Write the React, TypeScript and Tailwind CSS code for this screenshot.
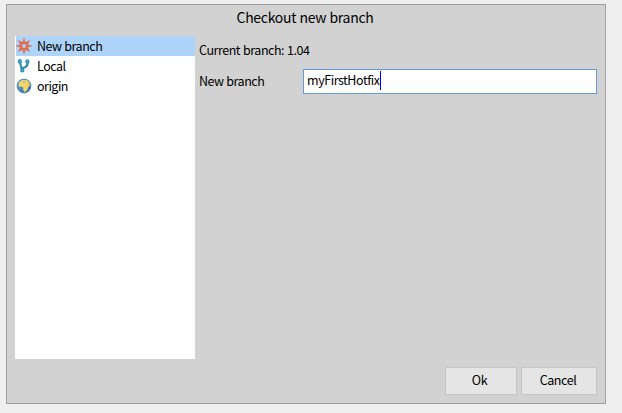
import type { ReactNode } from 'react';

function BurstIcon() {
  return (
    <svg width="16" height="16" viewBox="0 0 16 16" fill="none">
      <path d="M8 .2 9.3 4.6 13.6 2.4 11.4 6.7 15.8 8 11.4 9.3 13.6 13.6 9.3 11.4 8 15.8 6.7 11.4 2.4 13.6 4.6 9.3.2 8 4.6 6.7 2.4 2.4 6.7 4.6Z" fill="#df6b4a" stroke="#df6b4a" strokeWidth=".5" />
      <circle cx="8" cy="8" r="2.1" fill="#b5cbe9" />
    </svg>
  );
}

function BranchIcon() {
  return (
    <svg width="16" height="16" viewBox="0 0 16 16" fill="none">
      <path d="M3.9 4 4.9 8 6.2 12M11.4 4C12 7.6 10.6 9.4 6.4 10.2" stroke="#3389b0" strokeWidth="2.2" />
      <circle cx="3.8" cy="3.3" r="1.5" fill="#5eb6d6" stroke="#3394bb" strokeWidth="1.4" />
      <circle cx="11.4" cy="3.5" r="1.5" fill="#5eb6d6" stroke="#3394bb" strokeWidth="1.4" />
      <circle cx="6.3" cy="12.3" r="1.5" fill="#5eb6d6" stroke="#3394bb" strokeWidth="1.4" />
    </svg>
  );
}

function GlobeIcon() {
  return (
    <svg width="16" height="16" viewBox="0 0 16 16">
      <defs>
        <linearGradient id="sea" x2="1" y2="1">
          <stop stopColor="#79b0df" />
          <stop offset="1" stopColor="#2463a8" />
        </linearGradient>
      </defs>
      <circle cx="8" cy="8" r="6.9" fill="url(#sea)" stroke="#3976b0" strokeWidth=".8" />
      <path d="M3.8 3.6 6.8 1.8l3.9.2 2.7 2.5.8 2.4-1.6 1.6-1.5 3.5-2.1 2.2-1.6-1.5-.3-3.2-1.4-.7-2.6-.1-.6-2Z" fill="#f7d668" />
      <path d="m6.5 3.7 2-.5 1.8.7-1.5.5-1.8-.1Z" fill="#7bb0d5" />
      <path d="m12.6 4.5 1.2 2.5-.8.3-.9-1.8Z" fill="#c9a54b" />
    </svg>
  );
}

function Row({ icon, label, selected = false }: { icon: ReactNode; label: string; selected?: boolean }) {
  return (
    <li className={`flex h-5 items-center gap-[5px] ${selected ? 'bg-[#afd4fa]' : ''}`}>
      {icon}
      <span>{label}</span>
    </li>
  );
}

export default function App() {
  return (
    <div className="h-[413px] w-[622px] overflow-hidden bg-[#efefef] pt-1 pl-1.5 font-['Noto_Sans_CJK_SC',sans-serif] text-[12.5px] leading-5 tracking-[-0.5px] [word-spacing:0.5px] text-black">
      <main className="flex h-[400px] w-[600px] flex-col border border-[#9f9f9f] bg-[#d2d2d2] px-2">
        <h1 className="h-[31px] pt-[2px] pr-[2px] text-center text-[14px] tracking-[-0.3px]">Checkout new branch</h1>
        <div className="flex h-[323px] gap-1">
          <ul className="w-[180px] bg-white pl-px">
            <Row icon={<BurstIcon />} label="New branch" selected />
            <Row icon={<BranchIcon />} label="Local" />
            <Row icon={<GlobeIcon />} label="origin" />
          </ul>
          <section className="flex-1">
            <p className="mt-1 tracking-[-0.45px]">Current branch: 1.04</p>
            <div className="mt-[9px] flex h-[25px] items-center">
              <label className="w-[104px] pb-0.5">New branch</label>
              <div className="flex h-[25px] w-[294px] items-center border border-[#649bd4] bg-white pb-[3px] pl-[3px]">
                <span className="tracking-[-0.45px]">myFirstHotfix</span>
                <span className="h-[19px] w-px bg-[#0000e0]" />
              </div>
            </div>
          </section>
        </div>
        <footer className="mt-2 flex gap-1 pl-[430px] tracking-[-0.42px]">
          <button className="h-7 w-[72px] border border-[#c6c6c6] bg-[#e5e5e5] pr-[3px] pb-0.5">Ok</button>
          <button className="h-7 w-[76px] border border-[#c6c6c6] bg-[#e5e5e5] pr-[2px] pb-0.5">Cancel</button>
        </footer>
      </main>
    </div>
  );
}
